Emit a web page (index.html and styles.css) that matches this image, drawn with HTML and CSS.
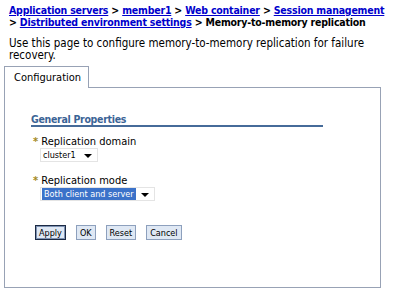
FILE: index.html
```html
<!DOCTYPE html>
<html lang="en">
<head>
    <meta charset="UTF-8">
    <title>Memory-to-memory replication</title>
    <link rel="stylesheet" href="styles.css">
</head>
<body>
    <div class="crumbs">
        <a href="#">Application servers</a> &gt; <a href="#">member1</a> &gt; <a href="#">Web container</a> &gt; <a href="#">Session management</a><br>
        &gt; <a href="#">Distributed environment settings</a> &gt; Memory-to-memory replication
    </div>
    <p class="desc">Use this page to configure memory-to-memory replication for failure recovery.</p>

    <div class="tabbar">
        <div class="tab">Configuration</div>
        <div class="tab-fill"></div>
    </div>
    <div class="panel">
        <h3 class="section">General Properties</h3>

        <div class="field">
            <div class="label"><span class="req">*</span> Replication domain</div>
            <div class="select narrow">
                <span class="value">cluster1</span>
                <span class="arrow"></span>
            </div>
        </div>

        <div class="field">
            <div class="label"><span class="req">*</span> Replication mode</div>
            <div class="select wide">
                <span class="value selected">Both client and server</span>
                <span class="arrow"></span>
            </div>
        </div>

        <div class="buttons">
            <button class="btn default">Apply</button>
            <button class="btn">OK</button>
            <button class="btn">Reset</button>
            <button class="btn">Cancel</button>
        </div>
    </div>
</body>
</html>
```

FILE: styles.css
```css
body {
    margin: 0;
    background: #fff;
    color: #000;
    font-family: "DejaVu Sans Condensed", "DejaVu Sans", sans-serif;
    font-size: 11px;
    width: 398px;
    height: 297px;
    overflow: hidden;
}
.crumbs {
    padding: 4px 0 0 9px;
    font-size: 10.5px;
    font-weight: bold;
    letter-spacing: -0.2px;
    line-height: 12px;
    white-space: nowrap;
}
.crumbs a {
    color: #0000cc;
}
.desc {
    margin: 9px 0 0 9px;
    width: 360px;
    font-size: 11.5px;
    line-height: 12px;
}
.tabbar {
    display: flex;
    margin: 5px 0 0 4px;
    width: 377px;
}
.tab {
    width: 85px;
    height: 22px;
    padding-left: 9px;
    box-sizing: border-box;
    border: 1px solid #98a2b5;
    border-bottom: none;
    line-height: 22px;
}
.tab-fill {
    flex: 1;
    border-bottom: 1px solid #98a2b5;
}
.panel {
    margin-left: 4px;
    width: 377px;
    height: 200px;
    box-sizing: border-box;
    border: 1px solid #98a2b5;
    border-top: none;
    padding: 26px 0 0 26px;
}
.section {
    margin: 0;
    width: 292px;
    color: #3b6496;
    font-size: 10.5px;
    font-weight: bold;
    letter-spacing: -0.3px;
    line-height: 11px;
    border-bottom: 2px solid #466b99;
}
.field {
    margin-top: 9px;
    padding-left: 2px;
}
.field + .field {
    margin-top: 13px;
}
.label {
    line-height: 12px;
}
.req {
    color: #a38a1a;
    font-weight: bold;
}
.select {
    display: flex;
    align-items: center;
    margin-left: 7px;
    height: 14px;
    border: 1px solid #e4e4e4;
    box-sizing: border-box;
    font-size: 9px;
    position: relative;
}
.narrow {
    width: 58px;
}
.wide {
    width: 115px;
}
.value {
    padding: 0 2px;
    line-height: 12px;
}
.value.selected {
    background: #3b72c9;
    color: #fff;
    margin-left: 1px;
}
.arrow {
    position: absolute;
    right: 5px;
    top: 5px;
    border-left: 4px solid transparent;
    border-right: 4px solid transparent;
    border-top: 4px solid #000;
}
.buttons {
    display: flex;
    gap: 10px;
    margin: 24px 0 0 4px;
}
.btn {
    font-family: inherit;
    font-size: 9px;
    height: 15px;
    padding: 0 3px;
    background: #dfe8f4;
    border: 1px solid #8da0bd;
    color: #000;
}
.btn.default {
    border: 1px solid #1b2a44;
    box-shadow: inset 0 0 0 1px #7f93b3;
}
```
